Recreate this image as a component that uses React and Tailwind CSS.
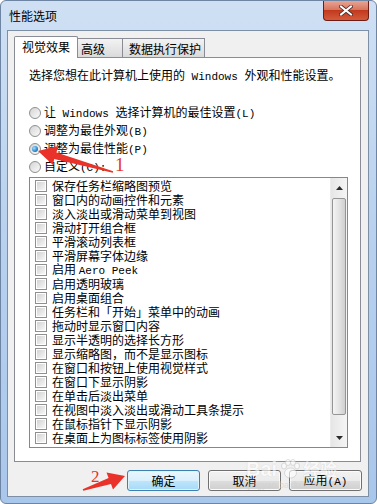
import React from 'react';

// 性能选项 dialog (Windows 7 look) with red annotation arrows
const effects = [
  '保存任务栏缩略图预览',
  '窗口内的动画控件和元素',
  '淡入淡出或滑动菜单到视图',
  '滑动打开组合框',
  '平滑滚动列表框',
  '平滑屏幕字体边缘',
  ['启用 ', 'Aero Peek'],
  '启用透明玻璃',
  '启用桌面组合',
  '任务栏和「开始」菜单中的动画',
  '拖动时显示窗口内容',
  '显示半透明的选择长方形',
  '显示缩略图，而不是显示图标',
  '在窗口和按钮上使用视觉样式',
  '在窗口下显示阴影',
  '在单击后淡出菜单',
  '在视图中淡入淡出或滑动工具条提示',
  '在鼠标指针下显示阴影',
  '在桌面上为图标标签使用阴影',
];

const Mono = ({ children }) => (
  <span className="font-['Liberation_Mono',monospace] text-[11px]">{children}</span>
);

const Radio = ({ checked }) => (
  <span className="w-[12px] h-[12px] rounded-full border border-[#8e8f8f] bg-gradient-to-br from-[#d4d4d4] to-[#fbfbfb] flex items-center justify-center shrink-0">
    {checked && (
      <span className="w-[6px] h-[6px] rounded-full bg-[radial-gradient(circle_at_35%_35%,#9fe0ff,#1b76c4_70%,#0d4f8f)]" />
    )}
  </span>
);

const Check = () => (
  <span className="w-[12px] h-[12px] border border-[#8f8f8f] bg-white p-[1px] flex shrink-0">
    <span className="flex-1 bg-gradient-to-br from-[#d3d3d3] to-[#f7f7f7]" />
  </span>
);

const Button = ({ children, focused }) => (
  <button
    className={
      focused
        ? 'w-[73px] h-[21px] rounded-[3px] border border-[#3c7fb1] bg-[linear-gradient(#eaf6fd_0%,#d9f0fc_50%,#bee6fd_51%,#a7d9f5_100%)] shadow-[inset_0_0_0_1px_#dff3fd] text-[12px] leading-[14px] text-black'
        : 'w-[73px] h-[21px] rounded-[3px] border border-[#707070] bg-[linear-gradient(#f2f2f2_0%,#ebebeb_50%,#dddddd_51%,#cfcfcf_100%)] shadow-[inset_0_0_0_1px_#fbfbfb] text-[12px] leading-[14px] text-black'
    }
  >
    {children}
  </button>
);

export default function App() {
  return (
    <div className="w-[377px] h-[504px] bg-white relative overflow-hidden font-['Noto_Sans_CJK_SC','Microsoft_YaHei',sans-serif] text-[12px] leading-[14px] text-black">
      <div className="w-[377px] h-[504px] rounded-[6px] border border-[#6d84a3] bg-gradient-to-b from-[#cfe0f4] via-[#b7d0ee] to-[#a9c7eb] flex flex-col">
        {/* title bar */}
        <div className="h-[29px] flex items-start justify-between">
          <span className="pl-[8px] pt-[8px] text-[12px] leading-[14px]">性能选项</span>
          <div className="mr-[7px] w-[46px] h-[20px] rounded-b-[4px] border border-t-0 border-[#6b1e17] bg-[linear-gradient(#e8a493_0%,#d8765f_45%,#c23a1e_50%,#d45a3c_100%)] flex items-center justify-center">
            <svg width="14" height="11" viewBox="0 0 14 11">
              <path d="M2 1.5 L12 9.5 M12 1.5 L2 9.5" stroke="#4a2a26" strokeWidth="3.6" strokeLinecap="square" />
              <path d="M2 1.5 L12 9.5 M12 1.5 L2 9.5" stroke="#ffffff" strokeWidth="2" strokeLinecap="square" />
            </svg>
          </div>
        </div>

        {/* client area */}
        <div className="ml-[6px] mr-[7px] h-[467px] border border-[#7d8fa5] bg-[#f0f0f0] flex flex-col">
          {/* tabs */}
          <div className="h-[26px] pl-[6px] flex items-end">
            <div className="relative z-10 -mb-px w-[64px] h-[22px] border border-b-0 border-[#898c95] bg-white rounded-t-[2px] flex items-center pl-[7px] pb-[1px]">
              视觉效果
            </div>
            <div className="w-[45px] h-[19px] border border-b-0 border-l-0 border-[#898c95] bg-gradient-to-b from-[#f3f3f3] to-[#dadada] flex items-center pl-[3px] pt-[2px]">
              高级
            </div>
            <div className="w-[82px] h-[19px] border border-b-0 border-l-0 border-[#898c95] bg-gradient-to-b from-[#f3f3f3] to-[#dadada] flex items-center pl-[6px] pt-[2px]">
              数据执行保护
            </div>
          </div>

          {/* tab panel */}
          <div className="ml-[6px] mr-[7px] h-[405px] border border-[#898c95] bg-white flex flex-col">
            <div className="mt-[10px] pl-[14px] h-[14px] whitespace-nowrap">
              选择您想在此计算机上使用的<Mono> Windows </Mono>外观和性能设置。
            </div>

            <div className="mt-[22px] flex flex-col">
              {[
                [<>让<Mono> Windows </Mono>选择计算机的最佳设置<Mono>(L)</Mono></>, false],
                [<>调整为最佳外观<Mono>(B)</Mono></>, false],
                [<>调整为最佳性能<Mono>(P)</Mono></>, true],
                [<>自定义<Mono>(C):</Mono></>, false],
              ].map(([label, checked], i) => (
                <div key={i} className="h-[18px] pl-[14px] flex items-center gap-[3px] whitespace-nowrap">
                  <Radio checked={checked} />
                  <span>{label}</span>
                </div>
              ))}
            </div>

            {/* effects list */}
            <div className="mt-[1px] ml-[14px] w-[319px] h-[271px] border border-[#828790] flex">
              <div className="flex-1 pt-[1px] flex flex-col overflow-hidden">
                {effects.map((e, i) => (
                  <div key={i} className="h-[14px] pl-[5px] flex items-center gap-[5px] whitespace-nowrap">
                    <Check />
                    <span>{Array.isArray(e) ? <>{e[0]}<Mono>{e[1]}</Mono></> : e}</span>
                  </div>
                ))}
              </div>
              {/* scrollbar */}
              <div className="w-[17px] bg-gradient-to-r from-[#e6e6e6] to-[#f5f5f5] border-l border-[#ececec] flex flex-col">
                <div className="h-[20px] flex items-center justify-center">
                  <svg width="7" height="4" viewBox="0 0 7 4"><path d="M0 4 L3.5 0 L7 4 Z" fill="#2a2a2a" /></svg>
                </div>
                <div className="mx-[1px] h-[217px] rounded-[2px] border border-[#959595] bg-gradient-to-r from-[#f4f4f4] via-[#e4e4e4] to-[#cfcfcf]" />
                <div className="flex-1 flex items-end justify-center pb-[7px]">
                  <svg width="7" height="4" viewBox="0 0 7 4"><path d="M0 0 L7 0 L3.5 4 Z" fill="#2a2a2a" /></svg>
                </div>
              </div>
            </div>
          </div>

          {/* buttons */}
          <div className="mt-[8px] pr-[6px] flex justify-end gap-[8px]">
            <Button focused>确定</Button>
            <Button>取消</Button>
            <Button>应用<Mono>(A)</Mono></Button>
          </div>
        </div>
      </div>

      {/* faint watermark */}
      <div className="absolute left-[246px] top-[458px] pointer-events-none flex flex-col items-start opacity-60">
        <div className="flex items-center gap-[2px] font-['Liberation_Sans',sans-serif] text-[20px] leading-[22px] font-bold text-white [text-shadow:0_0_1px_#b5b5b5]">
          <span>Bai</span>
          <svg width="22" height="20" viewBox="0 0 22 20">
            <g fill="#ffffff" stroke="#bdbdbd" strokeWidth="0.8">
              <ellipse cx="5" cy="7" rx="2.5" ry="3" />
              <ellipse cx="9" cy="3.5" rx="2.5" ry="3" />
              <ellipse cx="14" cy="3.5" rx="2.5" ry="3" />
              <ellipse cx="18" cy="7" rx="2.5" ry="3" />
              <ellipse cx="11.5" cy="14" rx="6" ry="5" />
            </g>
          </svg>
          <span className="font-['Noto_Sans_CJK_SC',sans-serif] text-[17px]">经验</span>
        </div>
        <span className="ml-[2px] text-[9px] leading-[10px] text-[#d0d0d0] font-['Liberation_Sans',sans-serif]">jingyan.baidu.com</span>
      </div>

      {/* annotations */}
      <svg className="absolute left-0 top-0 pointer-events-none" width="377" height="504" viewBox="0 0 377 504">
        <polygon
          points="38,151 58,146 56.5,152.6 113.2,171.3 112.8,172.7 54.2,159 53,165"
          fill="#e8322a"
        />
        <polygon
          points="125,476 113,489.5 111,484 83.3,490.8 82.7,489.2 108.6,478 106.5,472.5"
          fill="#e8322a"
        />
      </svg>
      <span className="absolute left-[115px] top-[155px] text-[19px] leading-[20px] text-[#e8322a] font-['Liberation_Serif',serif]">1</span>
      <span className="absolute left-[91px] top-[468px] text-[17px] leading-[18px] text-[#e8322a] font-['Liberation_Serif',serif]">2</span>
    </div>
  );
}
